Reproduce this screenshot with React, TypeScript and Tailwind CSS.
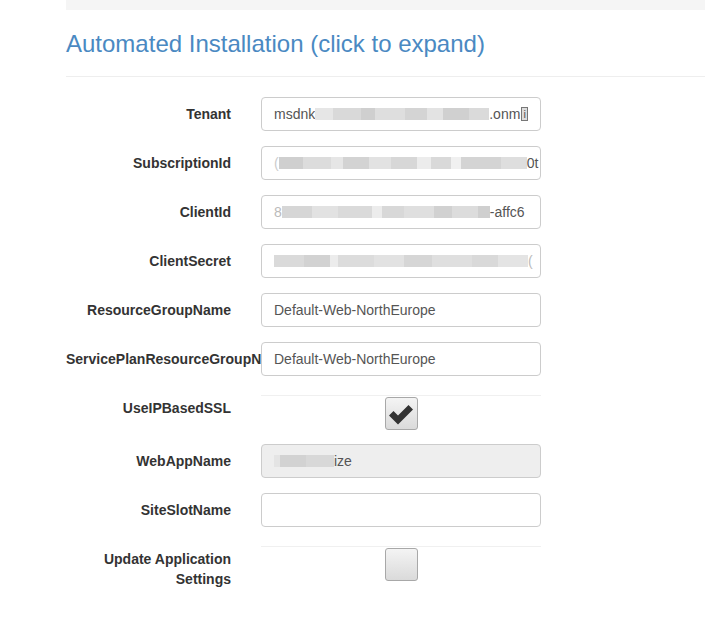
import type { ReactNode } from 'react'

type Block = [number, string]

/** Pixelated stand-in for the values that are blurred out in the screenshot. */
function Redacted({ blocks }: { blocks: Block[] }): JSX.Element {
  return (
    <span className="inline-flex h-[12px] items-stretch align-middle">
      {blocks.map(([w, c], i) => (
        <span key={i} className="inline-block h-full" style={{ width: w, backgroundColor: c }} />
      ))}
    </span>
  )
}

function Row({ label, children, check }: { label: ReactNode; children: ReactNode; check?: boolean }): JSX.Element {
  return (
    <div className="flex mb-[15px]">
      <label className="w-[180px] shrink-0 pr-[15px] pt-[7px] text-right text-[14px] font-bold leading-[20px] text-[#333]">
        {label}
      </label>
      <div className={check ? 'relative w-[280px] ml-[15px] pt-[4px]' : 'relative w-[280px] ml-[15px] bg-white'}>
        {children}
      </div>
    </div>
  )
}

function TextBox({ children, disabled }: { children?: ReactNode; disabled?: boolean }): JSX.Element {
  return (
    <div
      className={
        disabled
          ? 'flex h-[34px] items-center overflow-hidden whitespace-nowrap rounded-[4px] border border-[#ccc] bg-[#eee] px-[12px] text-[14px] text-[#555]'
          : 'flex h-[34px] items-center overflow-hidden whitespace-nowrap rounded-[4px] border border-[#ccc] bg-white px-[12px] text-[14px] text-[#555]'
      }
    >
      {children}
    </div>
  )
}

function CheckBox({ checked }: { checked?: boolean }): JSX.Element {
  return (
    <div className="flex h-[34px] justify-center border-t border-[#f0f0f0]">
      <div className="mt-px flex h-[33px] w-[33px] items-center justify-center rounded-[3px] border border-[#a8a8a8] bg-gradient-to-b from-[#f4f4f4] to-[#dadada]">
        {checked ? (
          <svg width="26" height="24" viewBox="0 0 26 24">
            <path d="M1 13.5 L5.5 9 L10 13.5 L20.5 3 L25 7.5 L10 22.5 Z" fill="#333" />
          </svg>
        ) : null}
      </div>
    </div>
  )
}

export default function App(): JSX.Element {
  return (
    <div className="min-h-[633px] bg-white pl-[66px] font-['Liberation_Sans',Arial,sans-serif]">
      <div className="h-[10px] bg-[#f5f5f5]" />
      <h3 className="pt-[20px] text-[24px] leading-[28px] text-[#4a89c2]">Automated Installation (click to expand)</h3>
      <hr className="mt-[18px] mb-[20px] border-t border-[#eee]" />

      <Row label="Tenant">
        <TextBox>
          <span>msdnk</span>
          <Redacted
            blocks={[
              [18, '#e6e6e6'], [28, '#d9d9d9'], [14, '#cfcfcf'], [30, '#dedede'], [22, '#d4d4d4'],
              [16, '#e3e3e3'], [26, '#d0d0d0'], [20, '#dadada'],
            ]}
          />
          <span>.onm</span>
          <span className="ml-px inline-flex h-[14px] w-[9px] items-center justify-center border border-[#777] bg-[#ddd] text-[11px] leading-none">i</span>
        </TextBox>
      </Row>
      <Row label="SubscriptionId">
        <TextBox>
          <span className="text-[#ccc]">(</span>
          <Redacted
            blocks={[
              [24, '#cfcfcf'], [28, '#dcdcdc'], [12, '#e6e6e6'], [26, '#d3d3d3'], [22, '#e2e2e2'],
              [26, '#d7d7d7'], [14, '#ececec'], [20, '#d9d9d9'], [10, '#f0f0f0'], [40, '#d4d4d4'],
              [26, '#dedede'],
            ]}
          />
          <span>0t</span>
        </TextBox>
      </Row>
      <Row label="ClientId">
        <TextBox>
          <span className="text-[#bbb]">8</span>
          <Redacted
            blocks={[
              [30, '#d6d6d6'], [26, '#e2e2e2'], [34, '#dadada'], [10, '#ececec'], [22, '#d8d8d8'],
              [30, '#dfdfdf'], [18, '#d1d1d1'], [26, '#dcdcdc'], [12, '#cfcfcf'],
            ]}
          />
          <span>-affc6</span>
        </TextBox>
      </Row>
      <Row label="ClientSecret">
        <TextBox>
          <Redacted
            blocks={[
              [30, '#dadada'], [26, '#d2d2d2'], [8, '#ececec'], [36, '#dcdcdc'], [30, '#e2e2e2'],
              [28, '#d6d6d6'], [40, '#dfdfdf'], [26, '#d9d9d9'], [30, '#e4e4e4'],
            ]}
          />
          <span className="text-[#bbb]">(</span>
        </TextBox>
      </Row>
      <Row label="ResourceGroupName">
        <TextBox>Default-Web-NorthEurope</TextBox>
      </Row>
      <Row label="ServicePlanResourceGroupName">
        <TextBox>Default-Web-NorthEurope</TextBox>
      </Row>
      <Row label="UseIPBasedSSL" check>
        <CheckBox checked />
      </Row>
      <Row label="WebAppName">
        <TextBox disabled>
          <Redacted blocks={[[6, '#e4e4e4'], [26, '#d2d2d2'], [28, '#d8d8d8']]} />
          <span>ize</span>
        </TextBox>
      </Row>
      <Row label="SiteSlotName">
        <TextBox />
      </Row>
      <Row label="Update Application Settings" check>
        <CheckBox />
      </Row>
    </div>
  )
}
